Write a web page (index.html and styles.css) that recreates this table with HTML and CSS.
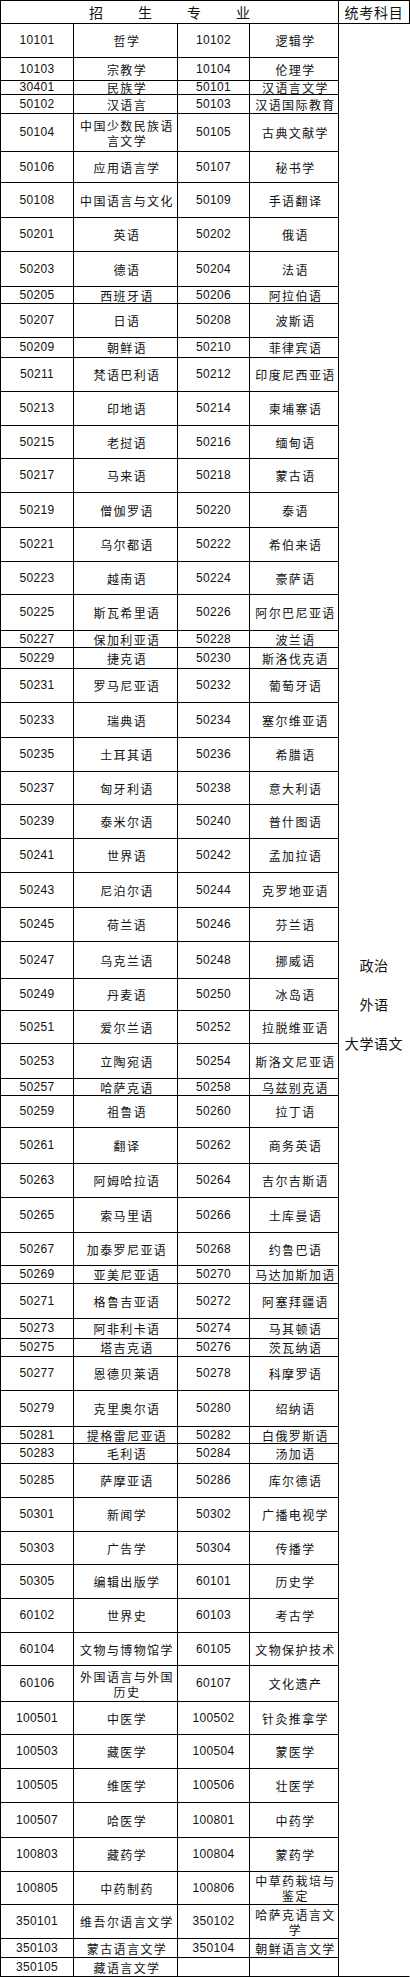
FILE: index.html
```html
<!DOCTYPE html>
<html lang="zh-CN">
<head>
<meta charset="utf-8">
<title>招生专业</title>
<link rel="stylesheet" href="styles.css">
</head>
<body>
<div class="sheet">
  <div class="cell head-major"><span>招</span><span>生</span><span>专</span><span>业</span></div>
  <div class="cell head-exam">统考科目</div>
  <div class="cell exam">
    <span>政治</span><span>外语</span><span>大学语文</span>
  </div>

  <div class="cell code">10101</div><div class="cell name">哲学</div><div class="cell code">10102</div><div class="cell name">逻辑学</div>
  <div class="cell code">10103</div><div class="cell name">宗教学</div><div class="cell code">10104</div><div class="cell name">伦理学</div>
  <div class="cell code">30401</div><div class="cell name">民族学</div><div class="cell code">50101</div><div class="cell name">汉语言文学</div>
  <div class="cell code">50102</div><div class="cell name">汉语言</div><div class="cell code">50103</div><div class="cell name">汉语国际教育</div>
  <div class="cell code">50104</div><div class="cell name">中国少数民族语言文学</div><div class="cell code">50105</div><div class="cell name">古典文献学</div>
  <div class="cell code">50106</div><div class="cell name">应用语言学</div><div class="cell code">50107</div><div class="cell name">秘书学</div>
  <div class="cell code">50108</div><div class="cell name">中国语言与文化</div><div class="cell code">50109</div><div class="cell name">手语翻译</div>
  <div class="cell code">50201</div><div class="cell name">英语</div><div class="cell code">50202</div><div class="cell name">俄语</div>
  <div class="cell code">50203</div><div class="cell name">德语</div><div class="cell code">50204</div><div class="cell name">法语</div>
  <div class="cell code">50205</div><div class="cell name">西班牙语</div><div class="cell code">50206</div><div class="cell name">阿拉伯语</div>
  <div class="cell code">50207</div><div class="cell name">日语</div><div class="cell code">50208</div><div class="cell name">波斯语</div>
  <div class="cell code">50209</div><div class="cell name">朝鲜语</div><div class="cell code">50210</div><div class="cell name">菲律宾语</div>
  <div class="cell code">50211</div><div class="cell name">梵语巴利语</div><div class="cell code">50212</div><div class="cell name">印度尼西亚语</div>
  <div class="cell code">50213</div><div class="cell name">印地语</div><div class="cell code">50214</div><div class="cell name">柬埔寨语</div>
  <div class="cell code">50215</div><div class="cell name">老挝语</div><div class="cell code">50216</div><div class="cell name">缅甸语</div>
  <div class="cell code">50217</div><div class="cell name">马来语</div><div class="cell code">50218</div><div class="cell name">蒙古语</div>
  <div class="cell code">50219</div><div class="cell name">僧伽罗语</div><div class="cell code">50220</div><div class="cell name">泰语</div>
  <div class="cell code">50221</div><div class="cell name">乌尔都语</div><div class="cell code">50222</div><div class="cell name">希伯来语</div>
  <div class="cell code">50223</div><div class="cell name">越南语</div><div class="cell code">50224</div><div class="cell name">豪萨语</div>
  <div class="cell code">50225</div><div class="cell name">斯瓦希里语</div><div class="cell code">50226</div><div class="cell name">阿尔巴尼亚语</div>
  <div class="cell code">50227</div><div class="cell name">保加利亚语</div><div class="cell code">50228</div><div class="cell name">波兰语</div>
  <div class="cell code">50229</div><div class="cell name">捷克语</div><div class="cell code">50230</div><div class="cell name">斯洛伐克语</div>
  <div class="cell code">50231</div><div class="cell name">罗马尼亚语</div><div class="cell code">50232</div><div class="cell name">葡萄牙语</div>
  <div class="cell code">50233</div><div class="cell name">瑞典语</div><div class="cell code">50234</div><div class="cell name">塞尔维亚语</div>
  <div class="cell code">50235</div><div class="cell name">土耳其语</div><div class="cell code">50236</div><div class="cell name">希腊语</div>
  <div class="cell code">50237</div><div class="cell name">匈牙利语</div><div class="cell code">50238</div><div class="cell name">意大利语</div>
  <div class="cell code">50239</div><div class="cell name">泰米尔语</div><div class="cell code">50240</div><div class="cell name">普什图语</div>
  <div class="cell code">50241</div><div class="cell name">世界语</div><div class="cell code">50242</div><div class="cell name">孟加拉语</div>
  <div class="cell code">50243</div><div class="cell name">尼泊尔语</div><div class="cell code">50244</div><div class="cell name">克罗地亚语</div>
  <div class="cell code">50245</div><div class="cell name">荷兰语</div><div class="cell code">50246</div><div class="cell name">芬兰语</div>
  <div class="cell code">50247</div><div class="cell name">乌克兰语</div><div class="cell code">50248</div><div class="cell name">挪威语</div>
  <div class="cell code">50249</div><div class="cell name">丹麦语</div><div class="cell code">50250</div><div class="cell name">冰岛语</div>
  <div class="cell code">50251</div><div class="cell name">爱尔兰语</div><div class="cell code">50252</div><div class="cell name">拉脱维亚语</div>
  <div class="cell code">50253</div><div class="cell name">立陶宛语</div><div class="cell code">50254</div><div class="cell name">斯洛文尼亚语</div>
  <div class="cell code">50257</div><div class="cell name">哈萨克语</div><div class="cell code">50258</div><div class="cell name">乌兹别克语</div>
  <div class="cell code">50259</div><div class="cell name">祖鲁语</div><div class="cell code">50260</div><div class="cell name">拉丁语</div>
  <div class="cell code">50261</div><div class="cell name">翻译</div><div class="cell code">50262</div><div class="cell name">商务英语</div>
  <div class="cell code">50263</div><div class="cell name">阿姆哈拉语</div><div class="cell code">50264</div><div class="cell name">吉尔吉斯语</div>
  <div class="cell code">50265</div><div class="cell name">索马里语</div><div class="cell code">50266</div><div class="cell name">土库曼语</div>
  <div class="cell code">50267</div><div class="cell name">加泰罗尼亚语</div><div class="cell code">50268</div><div class="cell name">约鲁巴语</div>
  <div class="cell code">50269</div><div class="cell name">亚美尼亚语</div><div class="cell code">50270</div><div class="cell name">马达加斯加语</div>
  <div class="cell code">50271</div><div class="cell name">格鲁吉亚语</div><div class="cell code">50272</div><div class="cell name">阿塞拜疆语</div>
  <div class="cell code">50273</div><div class="cell name">阿非利卡语</div><div class="cell code">50274</div><div class="cell name">马其顿语</div>
  <div class="cell code">50275</div><div class="cell name">塔吉克语</div><div class="cell code">50276</div><div class="cell name">茨瓦纳语</div>
  <div class="cell code">50277</div><div class="cell name">恩德贝莱语</div><div class="cell code">50278</div><div class="cell name">科摩罗语</div>
  <div class="cell code">50279</div><div class="cell name">克里奥尔语</div><div class="cell code">50280</div><div class="cell name">绍纳语</div>
  <div class="cell code">50281</div><div class="cell name">提格雷尼亚语</div><div class="cell code">50282</div><div class="cell name">白俄罗斯语</div>
  <div class="cell code">50283</div><div class="cell name">毛利语</div><div class="cell code">50284</div><div class="cell name">汤加语</div>
  <div class="cell code">50285</div><div class="cell name">萨摩亚语</div><div class="cell code">50286</div><div class="cell name">库尔德语</div>
  <div class="cell code">50301</div><div class="cell name">新闻学</div><div class="cell code">50302</div><div class="cell name">广播电视学</div>
  <div class="cell code">50303</div><div class="cell name">广告学</div><div class="cell code">50304</div><div class="cell name">传播学</div>
  <div class="cell code">50305</div><div class="cell name">编辑出版学</div><div class="cell code">60101</div><div class="cell name">历史学</div>
  <div class="cell code">60102</div><div class="cell name">世界史</div><div class="cell code">60103</div><div class="cell name">考古学</div>
  <div class="cell code">60104</div><div class="cell name">文物与博物馆学</div><div class="cell code">60105</div><div class="cell name">文物保护技术</div>
  <div class="cell code">60106</div><div class="cell name">外国语言与外国历史</div><div class="cell code">60107</div><div class="cell name">文化遗产</div>
  <div class="cell code">100501</div><div class="cell name">中医学</div><div class="cell code">100502</div><div class="cell name">针灸推拿学</div>
  <div class="cell code">100503</div><div class="cell name">藏医学</div><div class="cell code">100504</div><div class="cell name">蒙医学</div>
  <div class="cell code">100505</div><div class="cell name">维医学</div><div class="cell code">100506</div><div class="cell name">壮医学</div>
  <div class="cell code">100507</div><div class="cell name">哈医学</div><div class="cell code">100801</div><div class="cell name">中药学</div>
  <div class="cell code">100803</div><div class="cell name">藏药学</div><div class="cell code">100804</div><div class="cell name">蒙药学</div>
  <div class="cell code">100805</div><div class="cell name">中药制药</div><div class="cell code">100806</div><div class="cell name">中草药栽培与鉴定</div>
  <div class="cell code">350101</div><div class="cell name">维吾尔语言文学</div><div class="cell code">350102</div><div class="cell name">哈萨克语言文学</div>
  <div class="cell code">350103</div><div class="cell name">蒙古语言文学</div><div class="cell code">350104</div><div class="cell name">朝鲜语言文学</div>
  <div class="cell code">350105</div><div class="cell name">藏语言文学</div><div class="cell code"></div><div class="cell name"></div>
</div>
</body>
</html>
```

FILE: styles.css
```css
html, body {
  margin: 0;
  padding: 0;
  background: #ffffff;
}

body {
  width: 410px;
  color: #111111;
  font-family: "Noto Sans CJK SC", "Noto Sans", sans-serif;
}

.sheet {
  display: grid;
  grid-template-columns: 73px 104px 72px 89px 71px;
  grid-template-rows:
    23px
    34px 23px 14px 19px 38px 31px 35px 34px 35px 17px
    34px 20px 34px 34px 33px 34px 35px 34px 33px 36px
    17px 21px 34px 35px 34px 33px 34px 34px 35px 34px
    37px 32px 33px 35px 17px 32px 36px 34px 35px 33px
    18px 35px 20px 18px 34px 36px 17px 20px 34px 34px
    33px 34px 34px 33px 36px 33px 34px 34px 35px 34px
    33px 34px 19px 19px;
  border-top: 1px solid #000;
  border-left: 1px solid #000;
  width: max-content;
}

.cell {
  box-sizing: border-box;
  border-right: 1px solid #000;
  border-bottom: 1px solid #000;
  display: flex;
  align-items: center;
  justify-content: center;
  text-align: center;
  padding: 0 2px;
  overflow: visible;
  line-height: 15px;
}

.code {
  font-family: "Liberation Sans", Arial, sans-serif;
  font-size: 12px;
  letter-spacing: 0.3px;
}

.name {
  font-size: 12px;
  letter-spacing: 1.4px;
  padding-left: 3px;
  padding-right: 0;
}

.head-major {
  grid-column: 1 / 5;
  gap: 35px;
  font-size: 14px;
  line-height: 16px;
}

.head-exam {
  font-size: 14px;
  line-height: 16px;
  letter-spacing: 0.8px;
  padding: 0;
}

.exam {
  grid-column: 5;
  grid-row: 2 / -1;
  flex-direction: column;
  font-size: 14px;
  line-height: 39px;
  letter-spacing: 0.6px;
  padding-top: 8px;
  border-right-color: transparent;
}
```
